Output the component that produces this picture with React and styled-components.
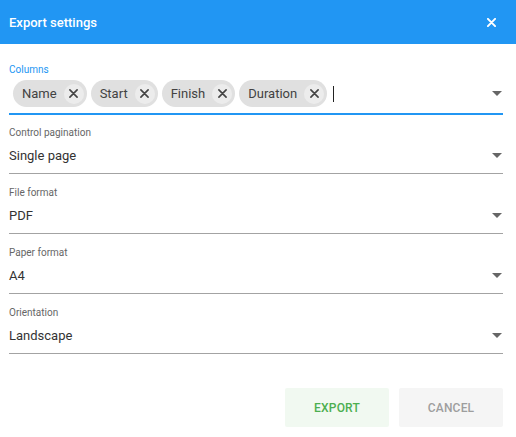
import styled, { createGlobalStyle } from "styled-components";

const Global = createGlobalStyle`
  html, body { margin: 0; padding: 0; background: #fff; }
  body { font-family: Roboto, "Noto Sans", sans-serif; }
  * { box-sizing: border-box; }
`;

const Dialog = styled.div`
  width: 516px;
  height: 437px;
  display: flex;
  flex-direction: column;
  background: #fff;
`;

const Header = styled.div`
  height: 44px;
  flex: none;
  background: #2196f3;
  display: flex;
  align-items: center;
  justify-content: space-between;
  padding: 0 18px 0 9px;
  color: #fff;
  font-size: 13px;
  font-weight: 500;
`;

const CloseButton = styled.button`
  border: 0;
  background: none;
  padding: 0;
  width: 14px;
  height: 14px;
  display: flex;
  align-items: center;
  justify-content: center;
  cursor: pointer;
`;

const Body = styled.div`
  flex: 1;
  display: flex;
  flex-direction: column;
  padding: 20px 13px 10px 9px;
`;

const Field = styled.div`
  display: flex;
  flex-direction: column;
  margin-bottom: ${(p) => (p.$first ? 12 : 13)}px;
`;

const Label = styled.div`
  font-size: 10px;
  line-height: 12px;
  color: ${(p) => (p.$focused ? "#2196f3" : "#666")};
`;

const Control = styled.div`
  display: flex;
  align-items: center;
  height: ${(p) => (p.$focused ? 39 : 35)}px;
  border-bottom: ${(p) => (p.$focused ? "2px solid #2196f3" : "1px solid #a3a3a3")};
  padding: ${(p) => (p.$focused ? "0 0 2px 4px" : "0 0 1px 0")};
  font-size: 13px;
  color: #333;
`;

const Value = styled.div`
  flex: 1;
`;

const Chips = styled.div`
  flex: 1;
  display: flex;
  align-items: center;
  gap: 4px;
`;

const Chip = styled.div`
  height: 27px;
  border-radius: 14px;
  background: #e0e0e0;
  display: flex;
  align-items: center;
  padding: 0 3px 0 9px;
  font-size: 13px;
  color: #424242;
  gap: 7px;
`;

const ChipDelete = styled.span`
  width: 20px;
  height: 20px;
  border-radius: 50%;
  background: #ececec;
  display: flex;
  align-items: center;
  justify-content: center;
`;

const Caret = styled.span`
  width: 1px;
  height: 16px;
  background: #222;
  margin-left: 2px;
`;

const Arrow = styled.span`
  width: 0;
  height: 0;
  border-left: 5px solid transparent;
  border-right: 5px solid transparent;
  border-top: 5px solid #666;
  margin-right: 1px;
`;

const Actions = styled.div`
  margin-top: auto;
  display: flex;
  justify-content: flex-end;
  gap: 10px;
`;

const ActionButton = styled.button`
  width: 104px;
  height: 39px;
  border: 0;
  border-radius: 2px;
  font-family: Roboto, "Noto Sans", sans-serif;
  font-size: 12px;
  font-weight: 500;
  letter-spacing: 0.2px;
  background: ${(p) => (p.$primary ? "#f1f9f1" : "#f5f5f5")};
  color: ${(p) => (p.$primary ? "#4caf50" : "#9e9e9e")};
  cursor: pointer;
`;

const X = ({ size, color, width }) => (
  <svg width={size} height={size} viewBox="0 0 10 10">
    <path d="M1 1 L9 9 M9 1 L1 9" stroke={color} strokeWidth={width} strokeLinecap="round" />
  </svg>
);

const fields = [
  { label: "Control pagination", value: "Single page" },
  { label: "File format", value: "PDF" },
  { label: "Paper format", value: "A4" },
  { label: "Orientation", value: "Landscape" },
];

const columns = ["Name", "Start", "Finish", "Duration"];

export default function App() {
  return (
    <>
      <Global />
      <Dialog>
        <Header>
          <span>Export settings</span>
          <CloseButton aria-label="close">
            <X size={9} color="#fff" width={2.2} />
          </CloseButton>
        </Header>
        <Body>
          <Field $first>
            <Label $focused>Columns</Label>
            <Control $focused>
              <Chips>
                {columns.map((c) => (
                  <Chip key={c}>
                    {c}
                    <ChipDelete>
                      <X size={9} color="#444" width={1.8} />
                    </ChipDelete>
                  </Chip>
                ))}
                <Caret />
              </Chips>
              <Arrow />
            </Control>
          </Field>
          {fields.map((f) => (
            <Field key={f.label}>
              <Label>{f.label}</Label>
              <Control>
                <Value>{f.value}</Value>
                <Arrow />
              </Control>
            </Field>
          ))}
          <Actions>
            <ActionButton $primary>EXPORT</ActionButton>
            <ActionButton>CANCEL</ActionButton>
          </Actions>
        </Body>
      </Dialog>
    </>
  );
}
